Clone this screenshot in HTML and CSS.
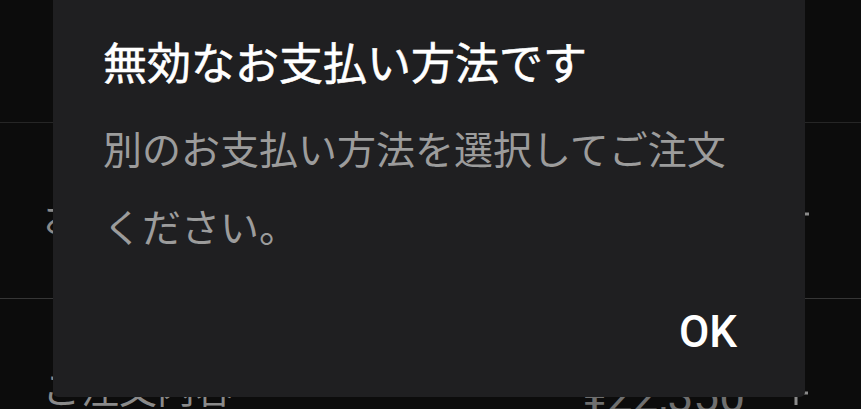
FILE: index.html
```html
<!DOCTYPE html>
<html lang="ja">
<head>
<meta charset="utf-8">
<title>無効なお支払い方法です</title>
<link rel="stylesheet" href="styles.css">
</head>
<body>
<div class="screen">
  <div class="row row-top"></div>
  <div class="row row-mid">
    <span class="row-label">お支払い方法</span>
    <svg class="plus plus-mid" width="26" height="26" viewBox="0 0 26 26"><path d="M1 13 H25 M13 1 V25" fill="none" stroke="#8a8a8a" stroke-width="3"/></svg>
  </div>
  <div class="row row-bottom">
    <span class="row-label">ご注文内容</span>
    <span class="row-right"><span class="price">¥22,350</span>
      <svg class="plus plus-bottom" width="26" height="26" viewBox="0 0 26 26"><path d="M1 13 H25 M13 1 V25" fill="none" stroke="#8a8a8a" stroke-width="3"/></svg>
    </span>
  </div>
</div>
<div class="dialog">
  <h2 class="dialog-title">無効なお支払い方法です</h2>
  <p class="dialog-body">別のお支払い方法を選択してご注文ください。</p>
  <div class="dialog-actions">
    <button class="dialog-btn">OK</button>
  </div>
</div>
</body>
</html>
```
FILE: styles.css
```css
html, body {
  margin: 0;
  padding: 0;
  background: #0c0c0c;
  width: 861px;
  height: 409px;
  overflow: hidden;
  font-family: "Noto Sans CJK JP", "Noto Sans", sans-serif;
}
.screen {
  display: flex;
  flex-direction: column;
}
.row {
  display: flex;
  align-items: center;
  justify-content: space-between;
  padding: 0 52px 0 43px;
  box-sizing: border-box;
}
.row-top {
  height: 123px;
  border-bottom: 1px solid #262626;
}
.row-mid {
  height: 176px;
  border-bottom: 1px solid #363636;
}
.row-bottom {
  height: 120px;
  align-items: flex-start;
  padding-top: 66px;
}
.row-label {
  color: #8a8a8a;
  font-size: 38px;
  line-height: 44px;
}
.row-mid .row-label {
  margin-top: 10px;
}
.plus-mid {
  margin-top: 7px;
  margin-right: -1px;
}
.row-right {
  display: flex;
  align-items: flex-start;
  gap: 38px;
}
.price {
  color: #6f6f6f;
  font-family: "Roboto", sans-serif;
  font-size: 46px;
  line-height: 46px;
  margin-top: 8px;
}
.plus-bottom {
  margin-top: 15px;
}
.dialog {
  position: absolute;
  left: 53px;
  top: -20px;
  width: 752px;
  height: 417px;
  background: #1f1f21;
  border-radius: 5px;
  box-sizing: border-box;
  padding: 20px 68px 0 50px;
  display: flex;
  flex-direction: column;
}
.dialog-title {
  margin: 0;
  padding-top: 31px;
  color: #ffffff;
  font-size: 44px;
  line-height: 60px;
  font-weight: 400;
  -webkit-text-stroke: 0.6px #ffffff;
  white-space: nowrap;
}
.dialog-body {
  margin: 17px 0 0 0;
  color: #9c9c9c;
  font-size: 39px;
  line-height: 78px;
}
.dialog-actions {
  display: flex;
  justify-content: flex-end;
  margin-top: 38px;
}
.dialog-btn {
  background: none;
  border: none;
  padding: 0;
  color: #ffffff;
  font-family: "Roboto", sans-serif;
  font-weight: 500;
  font-size: 44px;
  line-height: 60px;
}
```
